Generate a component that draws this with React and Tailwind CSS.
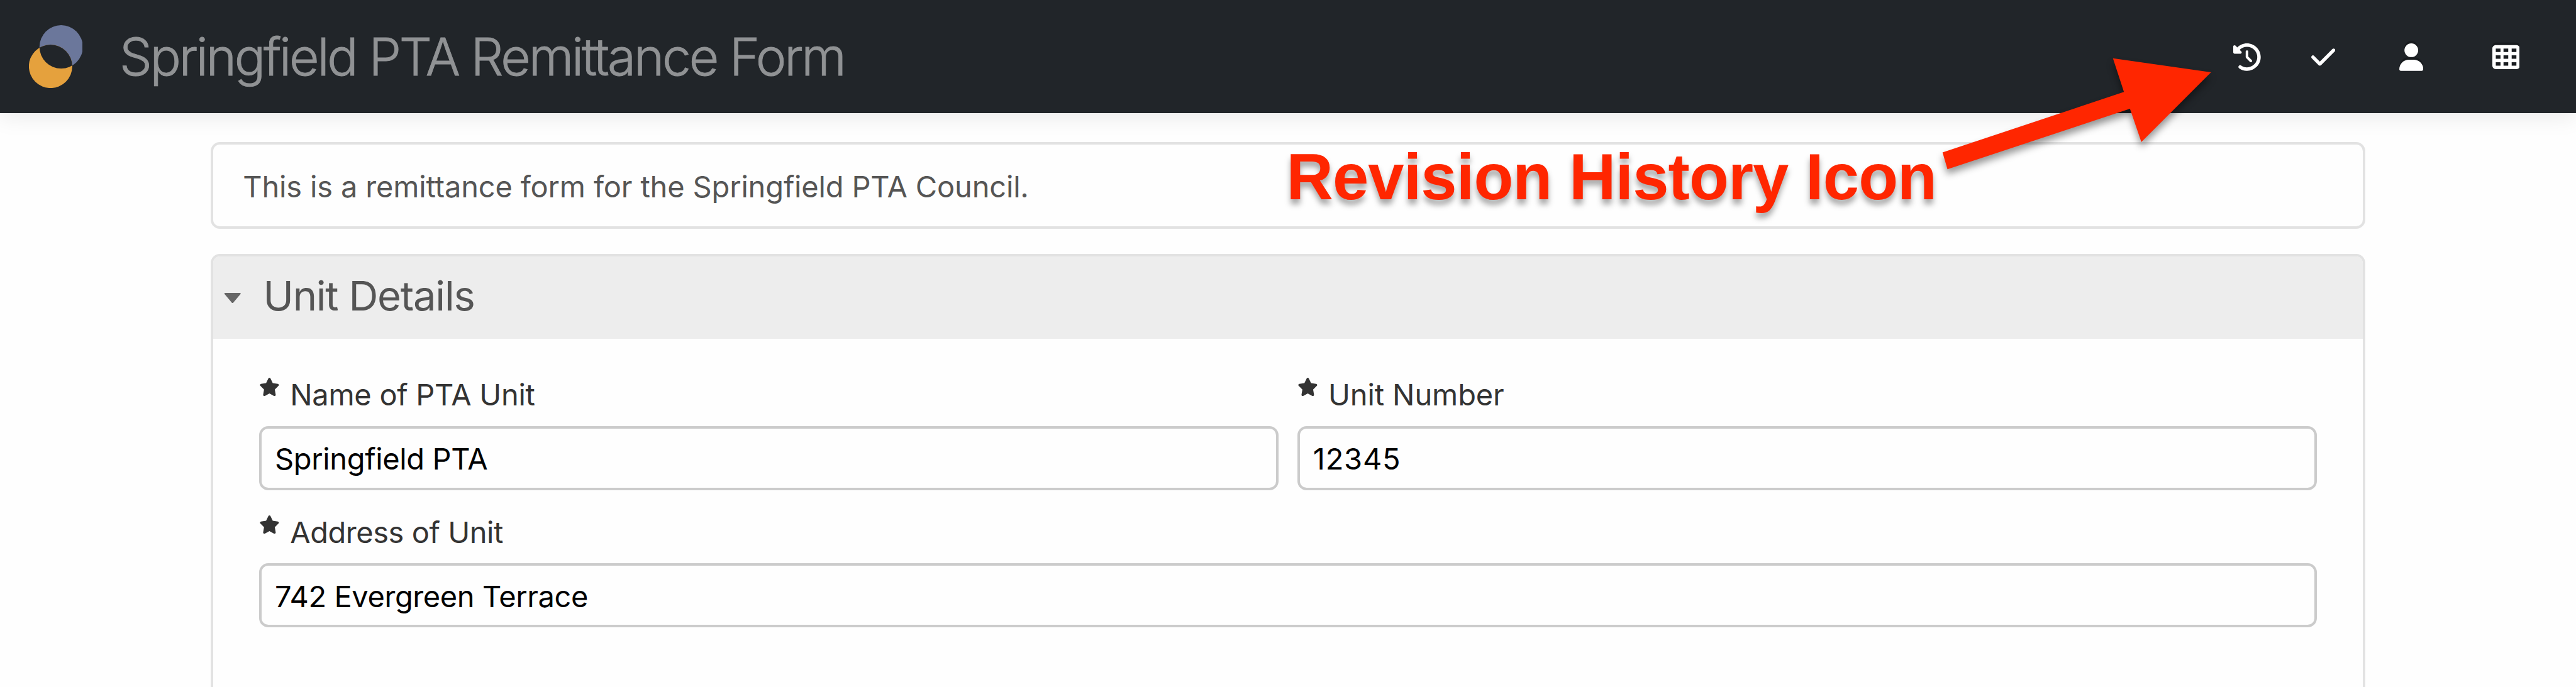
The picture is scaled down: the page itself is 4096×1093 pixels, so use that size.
import React from "react";
import { FaClockRotateLeft, FaCheck, FaUser, FaTableCells, FaStar } from "react-icons/fa6";

function Logo() {
  return (
    <svg viewBox="50 43 94 110" className="h-[100.2px] w-[85.6px] shrink-0">
      <circle cx="106.3" cy="81" r="37.9" fill="#6b779b" />
      <circle cx="87.8" cy="115" r="37.9" fill="#e5a13d" />
      <clipPath id="lens">
        <circle cx="106.3" cy="81" r="37.9" />
      </clipPath>
      <circle cx="87.8" cy="115" r="37.9" fill="#212529" clipPath="url(#lens)" />
    </svg>
  );
}

function Header() {
  return (
    <header className="relative z-10 flex h-[180.4px] shrink-0 items-center bg-[#212529] pr-[89.7px] pl-[45.6px] text-white shadow-[0_7px_33px_rgba(0,0,0,0.08)]">
      <Logo />
      <h1 className="ml-[58.7px] pt-[1px] text-[82px] leading-[180px] font-light tracking-[-3.19px] whitespace-nowrap text-[#909294] [-webkit-text-stroke:0.9px_#909294]">
        Springfield PTA Remittance Form
      </h1>
      <nav className="ml-auto flex items-center pt-[1.8px]">
        <FaClockRotateLeft className="h-[43.7px] w-[43.7px]" />
        <FaCheck className="ml-[80.6px] h-[43.7px] w-[38.3px]" />
        <FaUser className="ml-[101.1px] h-[43.7px] w-[38.3px] drop-shadow-[0_-3.6px_0_rgba(0,0,0,0.25)]" />
        <FaTableCells className="ml-[109.8px] h-[43.7px] w-[43.7px] drop-shadow-[0_-3.6px_0_rgba(0,0,0,0.25)]" />
      </nav>
    </header>
  );
}

function Field({ label, value, labelClass, valueClass }) {
  return (
    <label className="flex flex-1 flex-col">
      <span className="flex h-[60px] items-center text-[47px] leading-[60px] text-[#333]">
        <FaStar className="mb-[24px] h-[29.15px] w-[32.8px]" />
        <span className={"ml-[16.6px] " + labelClass}>{label}</span>
      </span>
      <span
        className={
          "mt-[19.9px] flex h-[102px] items-center rounded-[14.6px] border-4 border-[#cbcbcb] pt-[2px] pl-[21.3px] text-[47px] leading-none text-black " +
          valueClass
        }
      >
        {value}
      </span>
    </label>
  );
}

function Callout() {
  return (
    <div className="pointer-events-none absolute inset-0 z-20">
      <svg
        viewBox="0 0 4496 1200"
        preserveAspectRatio="none"
        className="h-full w-full drop-shadow-[0_8px_6px_rgba(0,0,0,0.4)]"
      >
        <path
          d="M3859 126.3 3687.8 101.7 3707 160.7 3390.4 266.3 3399 295.7 3717.5 190 3737.4 248Z"
          fill="#ff2600"
        />
      </svg>
      <p className="absolute top-[229.5px] left-[2045.5px] font-['Liberation_Sans',sans-serif] text-[103px] leading-none font-bold tracking-[-0.93px] whitespace-nowrap text-[#ff2600] [text-shadow:0_8px_10px_rgba(0,0,0,0.35)]">
        Revision History Icon
      </p>
    </div>
  );
}

export default function App() {
  return (
    <div className="relative flex h-[1093px] w-full flex-col overflow-hidden bg-[#fefefe] font-['Inter',sans-serif]">
      <Header />
      <main className="mx-auto flex w-[3425.5px] flex-1 flex-col pt-[45.5px]">
        <div className="flex h-[138.5px] shrink-0 items-center rounded-[14.6px] border-4 border-[#e2e2e2] pt-[2.4px] pl-[47px] text-[47px] leading-none tracking-[-0.163px] text-[#555]">
          This is a remittance form for the Springfield PTA Council.
        </div>
        <section className="mt-[40.1px] flex h-[800px] shrink-0 flex-col overflow-hidden rounded-[14.6px] border-4 border-[#e2e2e2]">
          <div className="flex h-[130.8px] shrink-0 items-center bg-[#ededed] pl-[17.8px]">
            <svg viewBox="0 0 28 18" className="h-[16.4px] w-[25.5px]">
              <path d="M0 0H28V2L14.5 18H13.5L0 2Z" fill="#666" />
            </svg>
            <h2 className="ml-[36px] pb-[7px] text-[65px] leading-none font-normal tracking-[-1.236px] text-[#555]">
              Unit Details
            </h2>
          </div>
          <div className="flex flex-col gap-[36.8px] pt-[58.6px] pr-[72.6px] pl-[72.5px]">
            <div className="flex gap-[29.15px]">
              <Field
                label="Name of PTA Unit"
                value="Springfield PTA"
                labelClass="tracking-[-0.27px]"
                valueClass="tracking-[-0.36px]"
              />
              <Field
                label="Unit Number"
                value="12345"
                labelClass="tracking-[-0.11px]"
                valueClass="tracking-[0.75px]"
              />
            </div>
            <div className="flex">
              <Field
                label="Address of Unit"
                value="742 Evergreen Terrace"
                labelClass="tracking-[-0.44px]"
                valueClass="tracking-[-0.41px]"
              />
            </div>
          </div>
        </section>
      </main>
      <Callout />
    </div>
  );
}
